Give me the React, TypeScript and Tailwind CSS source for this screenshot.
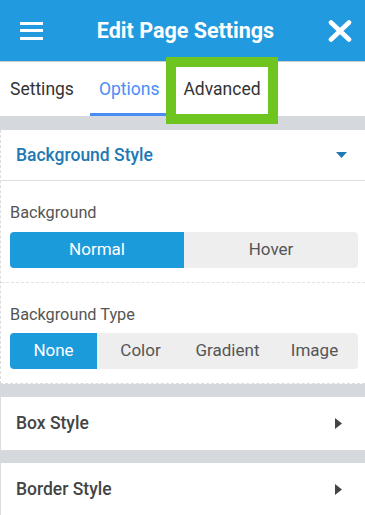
import { useState } from "react";

const bgModes = ["Normal", "Hover"];
const bgTypes = ["None", "Color", "Gradient", "Image"];

function Segmented({
  items,
  active,
  onPick,
}: {
  items: string[];
  active: string;
  onPick: (v: string) => void;
}) {
  return (
    <div className="flex h-9 overflow-hidden rounded bg-[#eeeeee]">
      {items.map((item) => (
        <button
          key={item}
          type="button"
          onClick={() => onPick(item)}
          className={
            item === active
              ? "flex-1 bg-[#1c9bdb] text-[17px] text-white"
              : "flex-1 text-[17px] text-[#555]"
          }
        >
          {item}
        </button>
      ))}
    </div>
  );
}

function CollapsedRow({ title }: { title: string }) {
  return (
    <div className="flex h-[53px] items-center justify-between border-l border-[#dddddd] bg-white pl-[15px] pr-[23px]">
      <span className="text-[17.5px] font-medium text-[#444]">{title}</span>
      <svg width="7" height="11" viewBox="0 0 7 11">
        <path d="M0 0 L7 5.5 L0 11 Z" fill="#444" />
      </svg>
    </div>
  );
}

export default function App() {
  const [tab, setTab] = useState("Options");
  const [mode, setMode] = useState("Normal");
  const [type, setType] = useState("None");

  return (
    <div className="min-h-[515px] w-[365px] overflow-hidden bg-[#d5d9de] font-['Roboto',sans-serif]">
      {/* top bar */}
      <header className="flex h-[61px] items-center justify-between bg-[#229ae0] pl-5 pr-[13px]">
        <button type="button" aria-label="Menu" className="flex w-[23px] flex-col gap-[4.5px]">
          <span className="h-[3px] w-full bg-white" />
          <span className="h-[3px] w-full bg-white" />
          <span className="h-[3px] w-full bg-white" />
        </button>
        <h1 className="text-[21.5px] font-bold leading-none text-white">Edit Page Settings</h1>
        <button type="button" aria-label="Close" className="p-0">
          <svg width="24" height="22" viewBox="0 0 24 22">
            <path d="M3 2.5 L21 19.5 M21 2.5 L3 19.5" stroke="white" strokeWidth="4.6" strokeLinecap="round" />
          </svg>
        </button>
      </header>

      {/* tabs */}
      <div className="relative flex h-[55px] items-stretch border-t border-[#cccccc] bg-white pl-[10px]">
        {["Settings", "Options", "Advanced"].map((t, i) => (
          <button
            key={t}
            type="button"
            onClick={() => setTab(t)}
            className={
              (i === 0 ? "pr-[16px] " : i === 1 ? "px-[9px] " : "ml-[5px] px-[10px] ") +
              (tab === t
                ? "border-b-[3px] border-[#4a8ef5] pt-[3px] text-[17.5px] text-[#4a8ef5]"
                : "border-b-[3px] border-transparent pt-[3px] text-[17.5px] text-[#333]")
            }
          >
            {t}
          </button>
        ))}
        {/* highlight ring around "Advanced" */}
        <div className="pointer-events-none absolute left-[166px] top-[-5px] h-[67px] w-[112px] border-[10px] border-[#6ec520]" />
      </div>

      <div className="h-[14px]" />

      {/* expanded section */}
      <section className="border-b border-l border-dashed border-[#dddddd] bg-white">
        <div className="flex h-[51px] items-center justify-between border-b border-solid border-[#dddddd] pl-[15px] pr-[18px]">
          <span className="text-[17.5px] font-medium text-[#2179b3]">Background Style</span>
          <svg width="11" height="6" viewBox="0 0 11 6">
            <path d="M0 0 L11 0 L5.5 6 Z" fill="#2179b3" />
          </svg>
        </div>
        <div className="pl-[9px] pr-[7px] pt-[20px] pb-[14px]">
          <div className="mb-[7px] text-[16.3px] leading-6 text-[#555]">Background</div>
          <Segmented items={bgModes} active={mode} onPick={setMode} />
        </div>
        <div className="border-t border-dashed border-[#e2e2e2] pl-[9px] pr-[7px] pt-[20px] pb-[14px]">
          <div className="mb-[6px] text-[16.3px] leading-6 text-[#555]">Background Type</div>
          <Segmented items={bgTypes} active={type} onPick={setType} />
        </div>
      </section>

      <div className="h-[13px]" />
      <CollapsedRow title="Box Style" />
      <div className="h-[13px]" />
      <CollapsedRow title="Border Style" />
    </div>
  );
}
